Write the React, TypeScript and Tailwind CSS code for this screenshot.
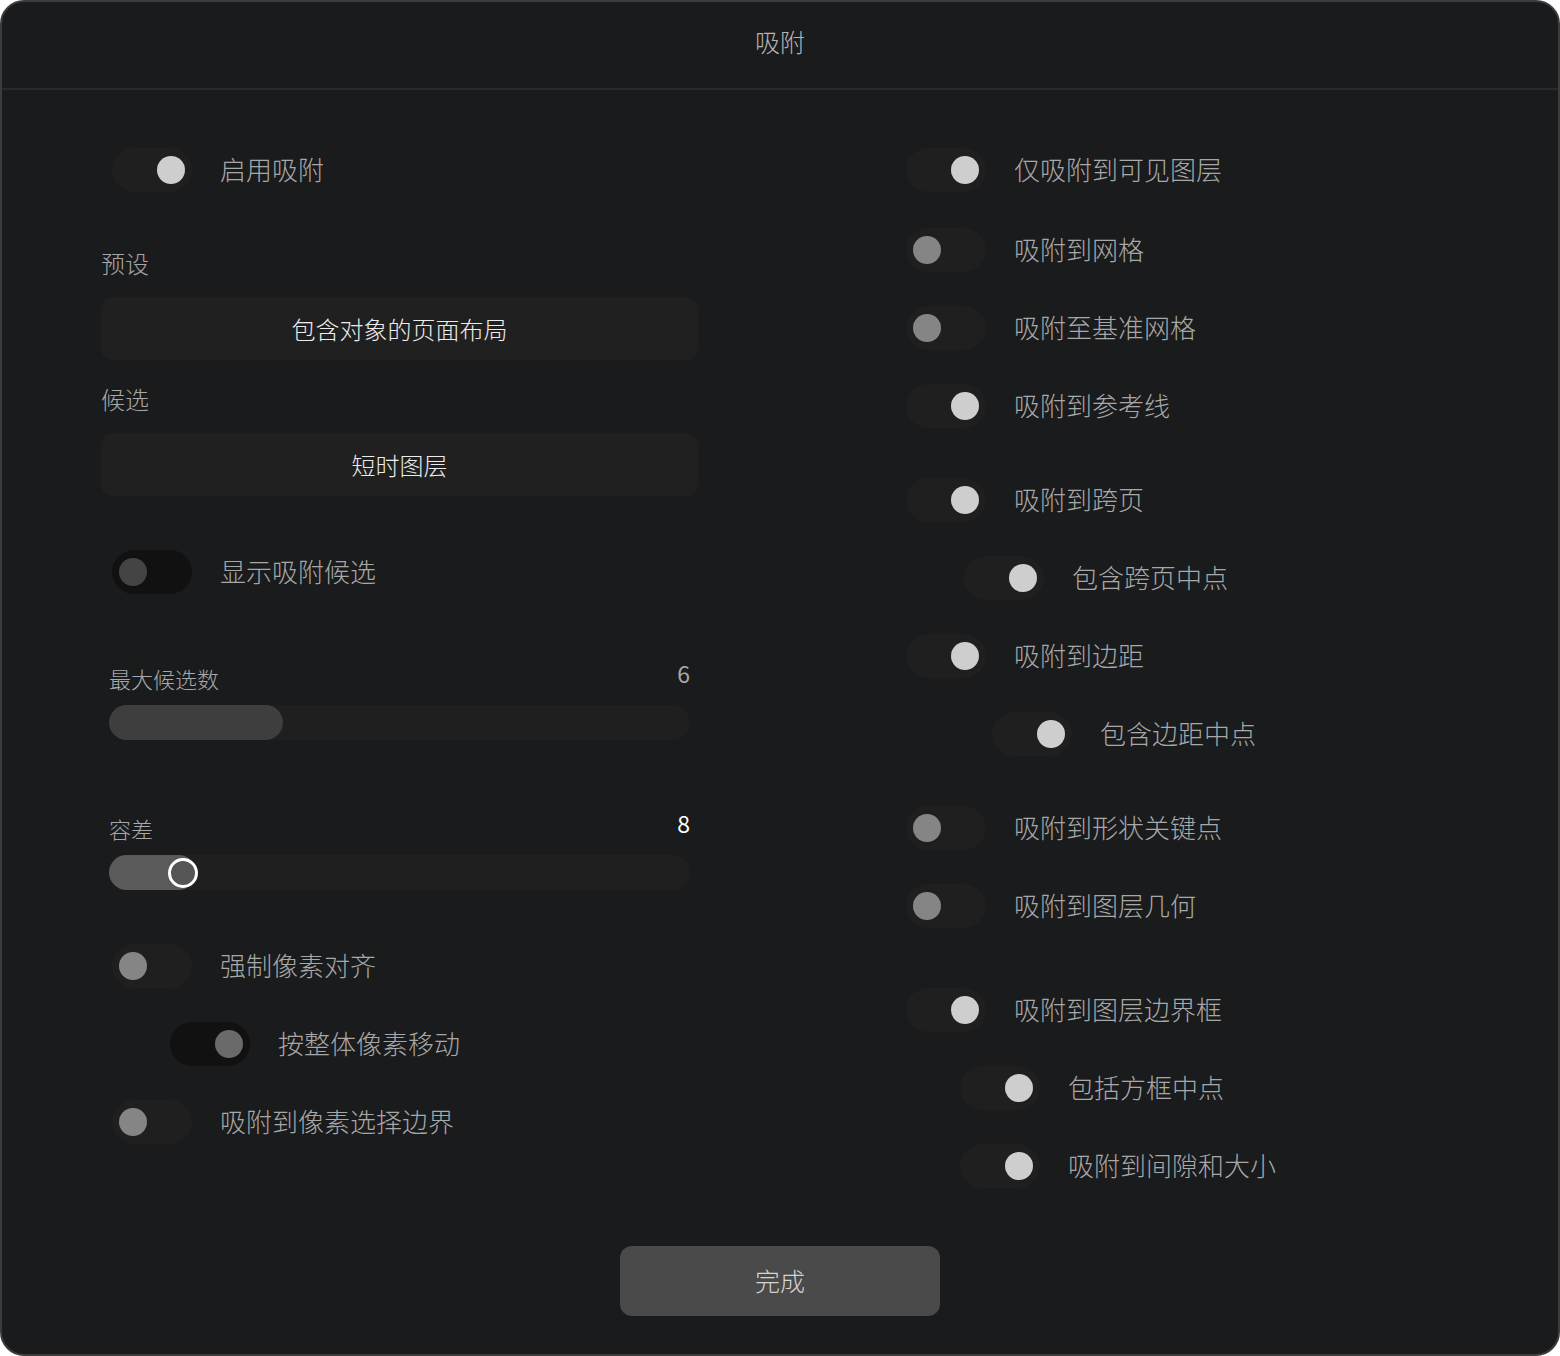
import React from "react";

type ToggleKind = "on" | "off" | "dimOff" | "dimOn";

function Toggle({ kind }: { kind: ToggleKind }) {
  const track = kind === "dimOff" || kind === "dimOn" ? "bg-[#111111]" : "bg-[#1f1f1f]";
  const thumb =
    kind === "on"
      ? "bg-[#cecece] ml-auto"
      : kind === "off"
        ? "bg-[#858585]"
        : kind === "dimOff"
          ? "bg-[#444444]"
          : "bg-[#6a6a6a] ml-auto";
  return (
    <span className={`flex h-[44px] w-[80px] shrink-0 items-center rounded-full px-[7px] ${track}`}>
      <span className={`h-[28px] w-[28px] rounded-full ${thumb}`} />
    </span>
  );
}

function Row({ label, kind, className = "" }: { label: string; kind: ToggleKind; className?: string }) {
  return (
    <div className={`flex h-[44px] items-center gap-[28px] ${className}`}>
      <Toggle kind={kind} />
      <span className="-mt-[2px] text-[26px] font-light leading-none text-[#a8a8a8]">{label}</span>
    </div>
  );
}

function Field({ label, value, className = "" }: { label: string; value: string; className?: string }) {
  return (
    <div className={className}>
      <div className="h-[32px] text-[24px] font-light leading-[30px] text-[#a8a8a8]">{label}</div>
      <div className="mt-[17px] flex h-[63px] items-center justify-center rounded-[12px] bg-[#202020] text-[24px] font-light text-[#ececec]">
        {value}
      </div>
    </div>
  );
}

function Slider({
  label,
  value,
  fill,
  fillColor,
  thumb,
  valueColor,
  className = "",
}: {
  label: string;
  value: string;
  fill: number;
  fillColor: string;
  thumb?: boolean;
  valueColor: string;
  className?: string;
}) {
  return (
    <div className={`px-2 ${className}`}>
      <div className="flex h-[28px] items-center justify-between">
        <span className="text-[22px] font-light leading-[26px] text-[#a8a8a8]">{label}</span>
        <span className={`-mt-[10px] text-[23px] leading-[28px] ${valueColor}`}>{value}</span>
      </div>
      <div className="relative mt-[13px] h-[35px] rounded-full bg-[#1f1f1f]">
        <div className={`h-full rounded-full ${fillColor}`} style={{ width: fill }} />
        {thumb && (
          <div
            className="absolute top-1/2 h-[30px] w-[30px] -translate-x-1/2 -translate-y-1/2 rounded-full border-[3px] border-white bg-[#555555]"
            style={{ left: fill - 13 }}
          />
        )}
      </div>
    </div>
  );
}

export default function App() {
  return (
    <div
      className="flex h-[1356px] w-[1560px] flex-col overflow-hidden rounded-[24px] border-2 border-[#3c3c3c] bg-[#1a1b1d]"
      style={{ fontFamily: '"Noto Sans CJK SC", "Noto Sans", sans-serif' }}
    >
      <header className="flex h-[88px] shrink-0 items-center justify-center border-b-2 border-[#2a2b2d] pb-[6px] text-[25px] font-light text-[#b4b4b4]">
        吸附
      </header>

      <div className="flex pl-[99px] pt-[58px]">
        <div className="w-[597px]">
          <Row label="启用吸附" kind="on" className="ml-[11px]" />
          <Field label="预设" value="包含对象的页面布局" className="mt-[56px]" />
          <Field label="候选" value="短时图层" className="mt-[24px]" />
          <Row label="显示吸附候选" kind="dimOff" className="ml-[11px] mt-[54px]" />
          <Slider
            label="最大候选数"
            value="6"
            fill={174}
            fillColor="bg-[#3e3e3e]"
            valueColor="text-[#a8a8a8]"
            className="mt-[70px]"
          />
          <Slider
            label="容差"
            value="8"
            fill={87}
            fillColor="bg-[#5a5a5a]"
            thumb
            valueColor="text-white"
            className="mt-[74px]"
          />
          <Row label="强制像素对齐" kind="off" className="ml-[11px] mt-[54px]" />
          <Row label="按整体像素移动" kind="dimOn" className="ml-[69px] mt-[34px]" />
          <Row label="吸附到像素选择边界" kind="off" className="ml-[11px] mt-[34px]" />
        </div>

        <div className="ml-[208px] flex flex-col">
          <Row label="仅吸附到可见图层" kind="on" />
          <Row label="吸附到网格" kind="off" className="mt-[36px]" />
          <Row label="吸附至基准网格" kind="off" className="mt-[34px]" />
          <Row label="吸附到参考线" kind="on" className="mt-[34px]" />
          <Row label="吸附到跨页" kind="on" className="mt-[50px]" />
          <Row label="包含跨页中点" kind="on" className="ml-[58px] mt-[34px]" />
          <Row label="吸附到边距" kind="on" className="mt-[34px]" />
          <Row label="包含边距中点" kind="on" className="ml-[86px] mt-[34px]" />
          <Row label="吸附到形状关键点" kind="off" className="mt-[50px]" />
          <Row label="吸附到图层几何" kind="off" className="mt-[34px]" />
          <Row label="吸附到图层边界框" kind="on" className="mt-[60px]" />
          <Row label="包括方框中点" kind="on" className="ml-[54px] mt-[34px]" />
          <Row label="吸附到间隙和大小" kind="on" className="ml-[54px] mt-[34px]" />
        </div>
      </div>

      <div className="mt-[58px] flex justify-center">
        <button className="h-[70px] w-[320px] rounded-[12px] bg-[#4a4a4a] text-[25px] font-light text-[#d4d4d4]">
          完成
        </button>
      </div>
    </div>
  );
}
